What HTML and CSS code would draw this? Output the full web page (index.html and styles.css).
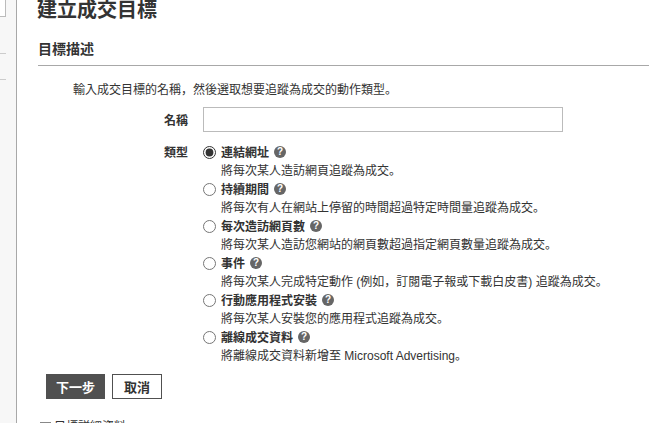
FILE: index.html
```html
<!DOCTYPE html>
<html>
  <head>
    <title>建立成交目標</title>
    <link rel="stylesheet" href="styles.css">
  </head>

  <body>
    <div class="page">
      <div class="side">
        <div class="side-box"></div>
        <div class="side-line side-line-one"></div>
        <div class="side-line side-line-two"></div>
      </div>
      <div class="main">
        <h1 class="title">建立成交目標</h1>
        <h2 class="section">目標描述</h2>
        <p class="intro">輸入成交目標的名稱，然後選取想要追蹤為成交的動作類型。</p>

        <div class="row row-name">
          <label class="row-label" for="goalName">名稱</label>
          <input class="name-input" type="text" id="goalName" />
        </div>

        <div class="row row-type">
          <div class="row-label type-label">類型</div>
          <div class="types">
            <div class="type">
              <input class="radio" type="radio" name="goalType" checked />
              <div>
                <div class="type-name">連結網址<span class="help">?</span></div>
                <div class="type-desc">將每次某人造訪網頁追蹤為成交。</div>
              </div>
            </div>
            <div class="type">
              <input class="radio" type="radio" name="goalType" />
              <div>
                <div class="type-name">持續期間<span class="help">?</span></div>
                <div class="type-desc">將每次有人在網站上停留的時間超過特定時間量追蹤為成交。</div>
              </div>
            </div>
            <div class="type">
              <input class="radio" type="radio" name="goalType" />
              <div>
                <div class="type-name">每次造訪網頁數<span class="help">?</span></div>
                <div class="type-desc">將每次某人造訪您網站的網頁數超過指定網頁數量追蹤為成交。</div>
              </div>
            </div>
            <div class="type">
              <input class="radio" type="radio" name="goalType" />
              <div>
                <div class="type-name">事件<span class="help">?</span></div>
                <div class="type-desc">將每次某人完成特定動作 (例如，訂閱電子報或下載白皮書) 追蹤為成交。</div>
              </div>
            </div>
            <div class="type">
              <input class="radio" type="radio" name="goalType" />
              <div>
                <div class="type-name">行動應用程式安裝<span class="help">?</span></div>
                <div class="type-desc">將每次某人安裝您的應用程式追蹤為成交。</div>
              </div>
            </div>
            <div class="type">
              <input class="radio" type="radio" name="goalType" />
              <div>
                <div class="type-name">離線成交資料<span class="help">?</span></div>
                <div class="type-desc">將離線成交資料新增至 Microsoft Advertising。</div>
              </div>
            </div>
          </div>
        </div>

        <div class="buttons">
          <button class="btn btn-next" type="button">下一步</button>
          <button class="btn btn-cancel" type="button">取消</button>
        </div>

        <div class="more">
          <span class="more-box"></span>目標詳細資料
        </div>
      </div>
    </div>
  </body>
</html>
```

FILE: styles.css
```css
html,
body {
  margin: 0;
  height: 100%;
  overflow: hidden;
  background-color: #fff;
}
body {
  font-family: "Liberation Sans", "Noto Sans CJK JP", sans-serif;
  font-size: 12px;
  color: #333;
}
.page {
  display: flex;
  height: 423px;
  overflow: hidden;
}
.side {
  position: relative;
  width: 16px;
  flex-shrink: 0;
  background-color: #f7f7f7;
  background-image: radial-gradient(#e6e6e6 0.5px, transparent 0.5px);
  background-size: 4px 4px;
  border-right: 1px solid #a8a8a8;
}
.side-box {
  position: absolute;
  top: 0;
  left: 0;
  width: 5px;
  height: 16px;
  background-color: #fff;
  border: 1px solid #bbb;
  border-left: none;
  border-top: none;
}
.side-line {
  position: absolute;
  left: 0;
  width: 6px;
  height: 1px;
  background-color: #ccc;
}
.side-line-one {
  top: 53px;
}
.side-line-two {
  top: 79px;
}
.main {
  flex: 1;
  padding-left: 21px;
  min-width: 0;
}
.title {
  margin: -4px 0 0 -1px;
  font-size: 20px;
  line-height: 28px;
  font-weight: 700;
}
.section {
  margin: 16px 0 0;
  padding: 0 0 6px;
  font-size: 14px;
  line-height: 19px;
  font-weight: 700;
  border-bottom: 1px solid #a8a8a8;
}
.intro {
  margin: 16px 0 0 35px;
  line-height: 17px;
}
.row {
  display: flex;
}
.row-name {
  margin-top: 8px;
  align-items: center;
}
.row-type {
  margin-top: 12px;
}
.row-label {
  width: 150px;
  margin-right: 15px;
  text-align: right;
  font-weight: 700;
}
.name-input {
  width: 360px;
  height: 25px;
  box-sizing: border-box;
  border: 1px solid #bbb;
  padding: 0 4px;
}
.type-label {
  line-height: 18px;
}
.types {
  display: flex;
  flex-direction: column;
}
.type {
  display: flex;
  height: 37px;
}
.radio {
  width: 13px;
  height: 13px;
  margin: 2px 5px 0 0;
  accent-color: #333;
}
.type-name {
  font-weight: 700;
  line-height: 18px;
}
.type-desc {
  line-height: 19px;
}
.help {
  display: inline-block;
  width: 12px;
  height: 12px;
  margin-left: 5px;
  border-radius: 50%;
  background-color: #666;
  color: #fff;
  font-size: 10px;
  line-height: 12px;
  text-align: center;
  vertical-align: 2px;
}
.buttons {
  display: flex;
  gap: 7px;
  margin: 8px 0 0 8px;
}
.btn {
  height: 25px;
  box-sizing: border-box;
  font-family: inherit;
  font-size: 13px;
  font-weight: 700;
  padding: 0;
}
.btn-next {
  width: 59px;
  background-color: #505050;
  border: 1px solid #505050;
  color: #fff;
}
.btn-cancel {
  width: 50px;
  background-color: #fff;
  border: 1px solid #505050;
  color: #333;
}
.more {
  margin-top: 20px;
  padding-left: 2px;
  display: flex;
  align-items: center;
  line-height: 17px;
}
.more-box {
  width: 9px;
  height: 9px;
  margin-right: 3px;
  border: 1px solid #888;
}
```
